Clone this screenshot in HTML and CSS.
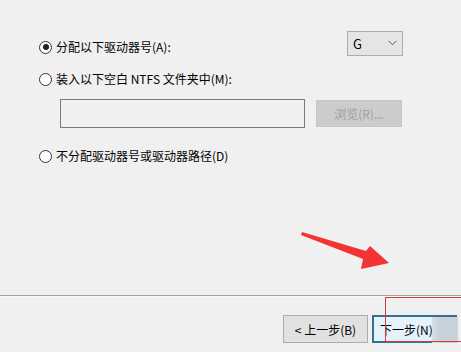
FILE: index.html
```html
<!DOCTYPE html>
<html>
<head>
<meta charset="utf-8">
<link rel="stylesheet" href="styles.css">
</head>
<body>
<div class="page">
  <div class="content">
    <div class="row row1">
      <label class="opt"><span class="radio checked"></span><span class="lbl">分配以下驱动器号(A):</span></label>
      <div class="combo"><span class="combo-val">G</span>
        <svg class="chev" width="9" height="6" viewBox="0 0 9 6"><path d="M0.5 0.8 L4.5 4.8 L8.5 0.8" fill="none" stroke="#5a5a5a" stroke-width="1"/></svg>
      </div>
    </div>
    <div class="row row2">
      <label class="opt"><span class="radio"></span><span class="lbl">装入以下空白 NTFS 文件夹中(M):</span></label>
    </div>
    <div class="row pathrow">
      <div class="pathbox"></div>
      <div class="browse">浏览(R)...</div>
    </div>
    <div class="row row3">
      <label class="opt"><span class="radio"></span><span class="lbl">不分配驱动器号或驱动器路径(D)</span></label>
    </div>
  </div>
  <div class="sep"></div>
  <div class="footer">
    <div class="btn back">&lt; 上一步(B)</div>
    <div class="btn next">下一步(N)</div>
  </div>
  <div class="blur"></div>
  <div class="redbox"></div>
  <svg class="arrow" width="461" height="352" viewBox="0 0 461 352">
    <polygon points="302,232 366,251 370,246 389,263 361,269 363,259 301,235" fill="#f23434"/>
  </svg>
</div>
</body>
</html>
```
FILE: styles.css
```css
html, body {
  margin: 0;
  padding: 0;
  background: #f0f0f0;
}
.page {
  position: relative;
  width: 461px;
  height: 352px;
  overflow: hidden;
  display: flex;
  flex-direction: column;
  font-family: "Noto Sans CJK SC", "Noto Sans", sans-serif;
  font-size: 12px;
  color: #000;
}
.content {
  height: 295px;
  padding-top: 31px;
  box-sizing: border-box;
}
.row {
  display: flex;
  align-items: center;
}
.row1 {
  height: 25px;
  padding-left: 39px;
  padding-right: 58px;
}
.row1 .opt {
  margin-top: 7px;
}
.row2 {
  margin-top: 14px;
  height: 18px;
  padding-left: 39px;
}
.row3 {
  margin-top: 19px;
  height: 18px;
  padding-left: 39px;
}
.opt {
  display: flex;
  align-items: center;
  height: 18px;
}
.radio {
  width: 11px;
  height: 11px;
  border: 1px solid #333;
  border-radius: 50%;
  background: #fff;
  box-sizing: content-box;
  position: relative;
  margin-right: 4px;
}
.radio.checked::after {
  content: "";
  position: absolute;
  left: 2.5px;
  top: 2.5px;
  width: 6px;
  height: 6px;
  border-radius: 50%;
  background: #222;
}
.lbl {
  line-height: 18px;
  white-space: nowrap;
}
.combo {
  margin-left: auto;
  width: 56px;
  height: 25px;
  box-sizing: border-box;
  border: 1px solid #adadad;
  background: #e5e5e5;
  display: flex;
  align-items: center;
  padding-left: 5px;
  padding-right: 5px;
  font-size: 13px;
}
.combo-val {
  flex: 1;
}
.chev {
  display: block;
  margin-top: -1px;
}
.pathrow {
  margin-top: 11px;
  height: 29px;
  padding-left: 60px;
  align-items: flex-start;
}
.pathbox {
  width: 245px;
  height: 29px;
  box-sizing: border-box;
  border: 1px solid #7a7a7a;
  background: #f0f0f0;
}
.browse {
  margin-left: 11px;
  margin-top: 1px;
  width: 86px;
  height: 27px;
  box-sizing: border-box;
  background: #cccccc;
  border: 1px solid #c6c6c6;
  color: #a0a0a0;
  display: flex;
  align-items: center;
  justify-content: center;
}
.sep {
  height: 1px;
  background: #a0a0a0;
  border-bottom: 1px solid #f8f8f8;
}
.footer {
  display: flex;
  padding-left: 283px;
  padding-top: 18px;
}
.btn {
  height: 28px;
  box-sizing: border-box;
  display: flex;
  align-items: center;
  white-space: nowrap;
}
.back {
  width: 85px;
  background: #e1e1e1;
  border: 1px solid #adadad;
  justify-content: center;
}
.next {
  margin-left: 4px;
  width: 85px;
  background: #e5f1fb;
  border: 2px solid #34708f;
  padding-left: 6px;
}
.blur {
  position: absolute;
  left: 432px;
  top: 317px;
  width: 26px;
  height: 26px;
  background: linear-gradient(90deg, #d6dfe6 0%, #c6d1d9 30%, #c7d2da 100%);
}
.redbox {
  position: absolute;
  left: 385px;
  top: 297px;
  width: 90px;
  height: 45px;
  border: 1px solid #d83a3a;
  box-sizing: border-box;
}
.arrow {
  position: absolute;
  left: 0;
  top: 0;
}
```
